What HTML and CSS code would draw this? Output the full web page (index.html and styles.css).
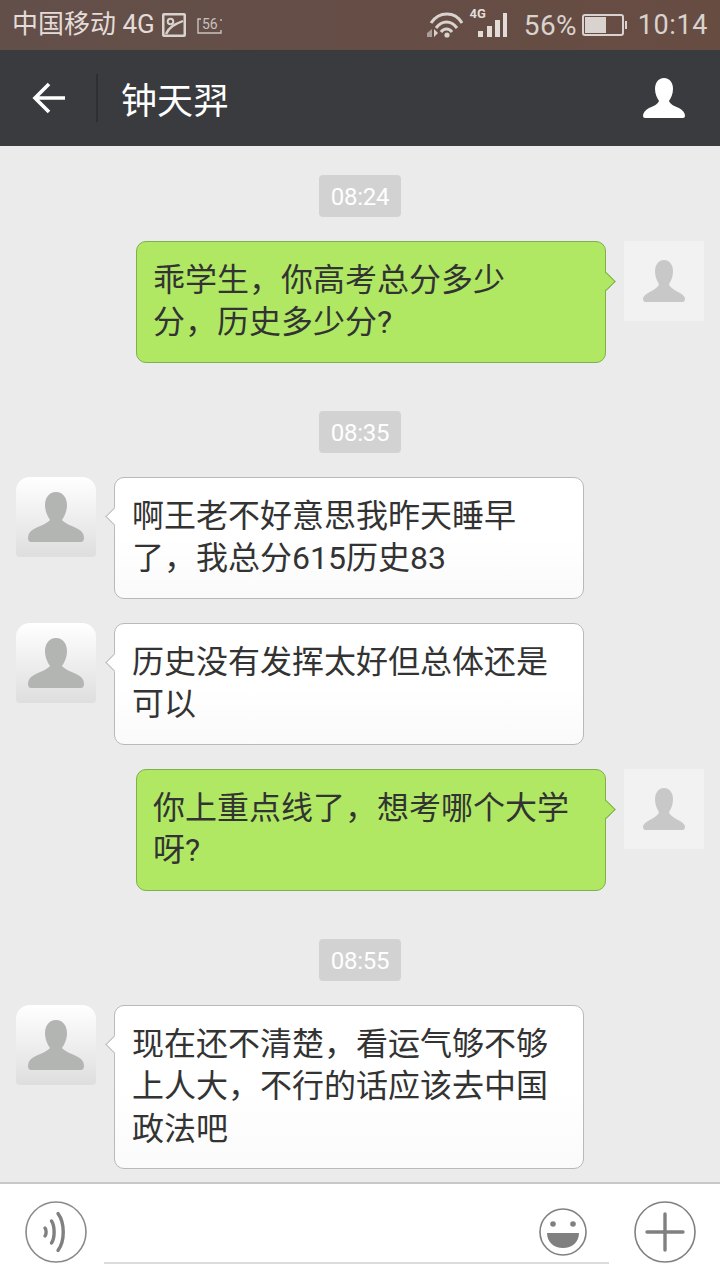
FILE: index.html
```html
<!DOCTYPE html>
<html lang="zh-CN">
<head>
    <meta charset="UTF-8">
    <meta name="viewport" content="width=device-width, initial-scale=1.0">
    <title>钟天羿</title>
    <link rel="stylesheet" href="styles.css">
</head>
<body>
<div class="app">
    <!-- Status bar -->
    <div class="status-bar">
        <span class="carrier">中国移动 4G</span>
        <svg class="ic-gallery" width="24" height="24" viewBox="0 0 24 24">
            <rect x="0" y="0" width="24" height="24" rx="2" fill="#d9d3cf"/>
            <rect x="2.5" y="2.5" width="19" height="19" fill="#655049"/>
            <circle cx="8.5" cy="8.5" r="2.8" fill="none" stroke="#d9d3cf" stroke-width="2"/>
            <path d="M4 21C7 14 13 11 21 8" fill="none" stroke="#d9d3cf" stroke-width="2.4"/>
        </svg>
        <svg class="ic-msg" width="26" height="17" viewBox="0 0 26 17">
            <path d="M4 2H1V16H24V13M24 4V2" fill="none" stroke="#c9c2bd" stroke-width="1.4"/>
            <text x="5" y="12" class="msg-count">56</text>
        </svg>
        <div class="status-right">
            <svg class="ic-wifi" width="36" height="28" viewBox="0 0 36 28">
                <path d="M4 12C12 0 28 0 35 12" fill="none" stroke="#d9d3cf" stroke-width="3"/>
                <path d="M9 17C15 9 24 9 30 17" fill="none" stroke="#d9d3cf" stroke-width="3"/>
                <path d="M14 21C17 17 22 17 25 21" fill="none" stroke="#d9d3cf" stroke-width="3"/>
                <circle cx="20" cy="24" r="2.6" fill="#d9d3cf"/>
                <path d="M0 22L5 18V26H0Z" fill="#a89d97"/>
                <path d="M7 18L11 22L7 26Z" fill="#d9d3cf"/>
            </svg>
            <div class="signal">
                <span class="signal-tag">4G</span>
                <svg width="29" height="24" viewBox="0 0 29 24">
                    <rect x="0" y="18" width="5" height="6" fill="#e2dcd8"/>
                    <rect x="9" y="13" width="5" height="11" fill="#e2dcd8"/>
                    <rect x="17" y="7" width="5" height="17" fill="#e2dcd8"/>
                    <rect x="25" y="0" width="4" height="24" fill="#e2dcd8"/>
                </svg>
            </div>
            <span class="battery-pct">56%</span>
            <svg class="ic-battery" width="46" height="22" viewBox="0 0 46 22">
                <rect x="1" y="1" width="40" height="20" rx="2" fill="none" stroke="#d9d3cf" stroke-width="2"/>
                <rect x="3" y="3" width="21" height="16" fill="#d9d3cf"/>
                <rect x="43" y="7" width="2" height="8" fill="#d9d3cf"/>
            </svg>
            <span class="clock">10:14</span>
        </div>
    </div>

    <!-- Title bar -->
    <div class="title-bar">
        <svg class="ic-back" width="34" height="32" viewBox="0 0 34 32">
            <path d="M17 2L3 16L17 30M3 16H33" fill="none" stroke="#fff" stroke-width="3.6"/>
        </svg>
        <div class="title-sep"></div>
        <div class="title">钟天羿</div>
        <svg class="ic-person" width="42" height="40" viewBox="0 0 42 40">
            <path d="M21 0C27 0 30 5 30 11C30 16 28 20 26 23C27 26 31 28 36 30C40 32 42 35 42 38C42 39 41 40 40 40H2C1 40 0 39 0 38C0 35 2 32 6 30C11 28 15 26 16 23C14 20 12 16 12 11C12 5 15 0 21 0Z" fill="#fff"/>
        </svg>
    </div>

    <!-- Messages -->
    <div class="chat">
        <div class="time"><span>08:24</span></div>
        <div class="msg msg-me">
            <div class="bubble">乖学生，你高考总分多少<br>分，历史多少分?</div>
            <div class="avatar">
                <svg width="42" height="42" viewBox="0 0 42 40" preserveAspectRatio="none"><path d="M21 0C27 0 30 5 30 11C30 16 28 20 26 23C27 26 31 28 36 31C40 33 42 35 42 37C42 39 41 40 40 40H2C1 40 0 39 0 37C0 35 2 33 6 31C11 28 15 26 16 23C14 20 12 16 12 11C12 5 15 0 21 0Z" fill="#c8c8c8"/></svg>
            </div>
        </div>

        <div class="time time-gap"><span>08:35</span></div>
        <div class="msg msg-other">
            <div class="avatar">
                <svg width="56" height="50" viewBox="0 0 56 50"><path d="M28 0C35 0 39 6 39 13C39 20 36 25 34 28C36 31 42 33 50 37C54 39 56 42 56 46C56 48 55 50 53 50H3C1 50 0 48 0 46C0 42 2 39 6 37C14 33 20 31 22 28C20 25 17 20 17 13C17 6 21 0 28 0Z" fill="#b3b5b3"/></svg>
            </div>
            <div class="bubble">啊王老不好意思我昨天睡早<br>了，我总分615历史83</div>
        </div>
        <div class="msg msg-other">
            <div class="avatar">
                <svg width="56" height="50" viewBox="0 0 56 50"><path d="M28 0C35 0 39 6 39 13C39 20 36 25 34 28C36 31 42 33 50 37C54 39 56 42 56 46C56 48 55 50 53 50H3C1 50 0 48 0 46C0 42 2 39 6 37C14 33 20 31 22 28C20 25 17 20 17 13C17 6 21 0 28 0Z" fill="#b3b5b3"/></svg>
            </div>
            <div class="bubble">历史没有发挥太好但总体还是<br>可以</div>
        </div>
        <div class="msg msg-me">
            <div class="bubble">你上重点线了，想考哪个大学<br>呀?</div>
            <div class="avatar">
                <svg width="42" height="42" viewBox="0 0 42 40" preserveAspectRatio="none"><path d="M21 0C27 0 30 5 30 11C30 16 28 20 26 23C27 26 31 28 36 31C40 33 42 35 42 37C42 39 41 40 40 40H2C1 40 0 39 0 37C0 35 2 33 6 31C11 28 15 26 16 23C14 20 12 16 12 11C12 5 15 0 21 0Z" fill="#c8c8c8"/></svg>
            </div>
        </div>

        <div class="time time-gap"><span>08:55</span></div>
        <div class="msg msg-other">
            <div class="avatar">
                <svg width="56" height="50" viewBox="0 0 56 50"><path d="M28 0C35 0 39 6 39 13C39 20 36 25 34 28C36 31 42 33 50 37C54 39 56 42 56 46C56 48 55 50 53 50H3C1 50 0 48 0 46C0 42 2 39 6 37C14 33 20 31 22 28C20 25 17 20 17 13C17 6 21 0 28 0Z" fill="#b3b5b3"/></svg>
            </div>
            <div class="bubble">现在还不清楚，看运气够不够<br>上人大，不行的话应该去中国<br>政法吧</div>
        </div>
    </div>

    <!-- Input bar -->
    <div class="input-bar">
        <svg class="ic-round" width="62" height="62" viewBox="0 0 62 62">
            <circle cx="31" cy="31" r="30" fill="#fff" stroke="#8a8a8a" stroke-width="1.6"/>
            <path d="M20 27C21.500 29 21.500 33 20 35" fill="none" stroke="#808080" stroke-width="3.4" stroke-linecap="round"/>
            <path d="M26.500 20C30 25 30 37 26.500 42" fill="none" stroke="#808080" stroke-width="3.4" stroke-linecap="round"/>
            <path d="M33 12.500C40 22 40 40 33 49.500" fill="none" stroke="#808080" stroke-width="3.4" stroke-linecap="round"/>
        </svg>
        <div class="input-line">
            <svg class="ic-emoji" width="48" height="48" viewBox="0 0 48 48">
                <circle cx="24" cy="24" r="23" fill="#fff" stroke="#808080" stroke-width="1.6"/>
                <circle cx="14" cy="16" r="2.800" fill="#808080"/>
                <circle cx="34" cy="16" r="2.800" fill="#808080"/>
                <path d="M8 25H40C40 34 33 40 24 40C15 40 8 34 8 25Z" fill="#808080"/>
            </svg>
        </div>
        <svg class="ic-round ic-plus" width="62" height="62" viewBox="0 0 62 62">
            <circle cx="31" cy="31" r="30" fill="#fff" stroke="#808080" stroke-width="1.6"/>
            <path d="M31 13V49M13 31H49" fill="none" stroke="#808080" stroke-width="3.4" stroke-linecap="round"/>
        </svg>
    </div>
</div>
</body>
</html>
```

FILE: styles.css
```css
body {
    margin: 0;
    padding: 0;
    background: #ebebeb;
    font-family: Roboto, "Noto Sans CJK SC", sans-serif;
}

.app {
    width: 720px;
    height: 1280px;
    display: flex;
    flex-direction: column;
    overflow: hidden;
}

/* Status bar */
.status-bar {
    height: 50px;
    flex: none;
    display: flex;
    align-items: center;
    padding: 0 12px 0 12px;
    background: linear-gradient(90deg, #634f4a, #674c42);
    color: #e3dcd8;
}

.carrier {
    font-size: 26px;
    line-height: 50px;
    margin-top: -2px;
}

.ic-gallery {
    margin-left: 7px;
}

.ic-msg {
    margin-left: 11px;
}

.msg-count {
    font-size: 14px;
    fill: #c9c2bd;
}

.status-right {
    margin-left: auto;
    display: flex;
    align-items: center;
}

.signal {
    display: flex;
    align-items: flex-end;
    height: 29px;
    margin: 0 0 5px 7px;
}

.signal-tag {
    font-size: 13px;
    font-weight: bold;
    line-height: 12px;
    align-self: flex-start;
    margin-right: -8px;
}

.battery-pct {
    font-size: 28px;
    letter-spacing: 0.3px;
    color: #d9d3cf;
    margin-left: 17px;
}

.ic-battery {
    margin-left: 5px;
}

.clock {
    font-size: 27px;
    letter-spacing: 0.6px;
    color: #d9d3cf;
    margin-left: 10px;
}

/* Title bar */
.title-bar {
    height: 96px;
    flex: none;
    display: flex;
    align-items: center;
    padding: 0 35px 0 32px;
    background: #3a3b3f;
    color: #fff;
}

.title-sep {
    width: 2px;
    height: 48px;
    margin-left: 30px;
    background: #2e2f32;
}

.title {
    font-size: 36px;
    margin-left: 23px;
    flex: 1;
}

/* Messages */
.chat {
    flex: 1;
    min-height: 0;
    display: flex;
    flex-direction: column;
    gap: 24px;
    padding-top: 29px;
    background: #ebebeb;
}

.time {
    display: flex;
    justify-content: center;
}

.time span {
    width: 82px;
    height: 42px;
    line-height: 45px;
    text-align: center;
    font-size: 24px;
    letter-spacing: -0.3px;
    color: #fff;
    background: #d2d2d2;
    border-radius: 4px;
}

.time-gap {
    margin-top: 24px;
}

.msg {
    display: flex;
    align-items: flex-start;
    padding: 0 16px;
}

.msg-me {
    justify-content: flex-end;
}

.avatar {
    width: 80px;
    height: 80px;
    flex: none;
    display: flex;
    justify-content: center;
    box-sizing: border-box;
}

.msg-me .avatar {
    padding-top: 19px;
    background: #f2f2f2;
}

.msg-other .avatar {
    padding-top: 15px;
    background: linear-gradient(#fff, #dedede);
    border-radius: 14px 14px 4px 4px;
}

.bubble {
    position: relative;
    width: 470px;
    box-sizing: border-box;
    padding: 17px 17px 18.2px;
    font-size: 32px;
    line-height: 42.4px;
    color: #333;
    border-radius: 10px;
}

.bubble::after {
    content: "";
    position: absolute;
    top: 32px;
    width: 12px;
    height: 12px;
    transform: rotate(45deg);
}

.msg-me .bubble {
    margin-right: 18px;
    padding-left: 16px;
    background: #b0e864;
    border: 1px solid #7eb04c;
}

.msg-me .bubble::after {
    top: 33px;
    right: -8px;
    background: #b0e864;
    border-top: 1px solid #7eb04c;
    border-right: 1px solid #7eb04c;
}

.msg-other .bubble {
    margin-left: 18px;
    background: linear-gradient(#fff 50%, #fafafa);
    border: 1px solid #b9b9b9;
}

.msg-other .bubble::after {
    left: -7px;
    background: #fff;
    border-left: 1px solid #b9b9b9;
    border-bottom: 1px solid #b9b9b9;
}

/* Input bar */
.input-bar {
    height: 98px;
    flex: none;
    box-sizing: border-box;
    display: flex;
    align-items: flex-start;
    padding: 17px 0 0 25px;
    background: #fff;
    border-top: 2px solid #c8c8c8;
}

.ic-round {
    flex: none;
}

.input-line {
    width: 505px;
    height: 61px;
    margin-left: 17px;
    display: flex;
    justify-content: flex-end;
    align-items: flex-start;
    border-bottom: 2px solid #dcdcdc;
}

.ic-emoji {
    margin: 7px 22px 0 0;
}

.ic-plus {
    margin-left: 25px;
}
```
